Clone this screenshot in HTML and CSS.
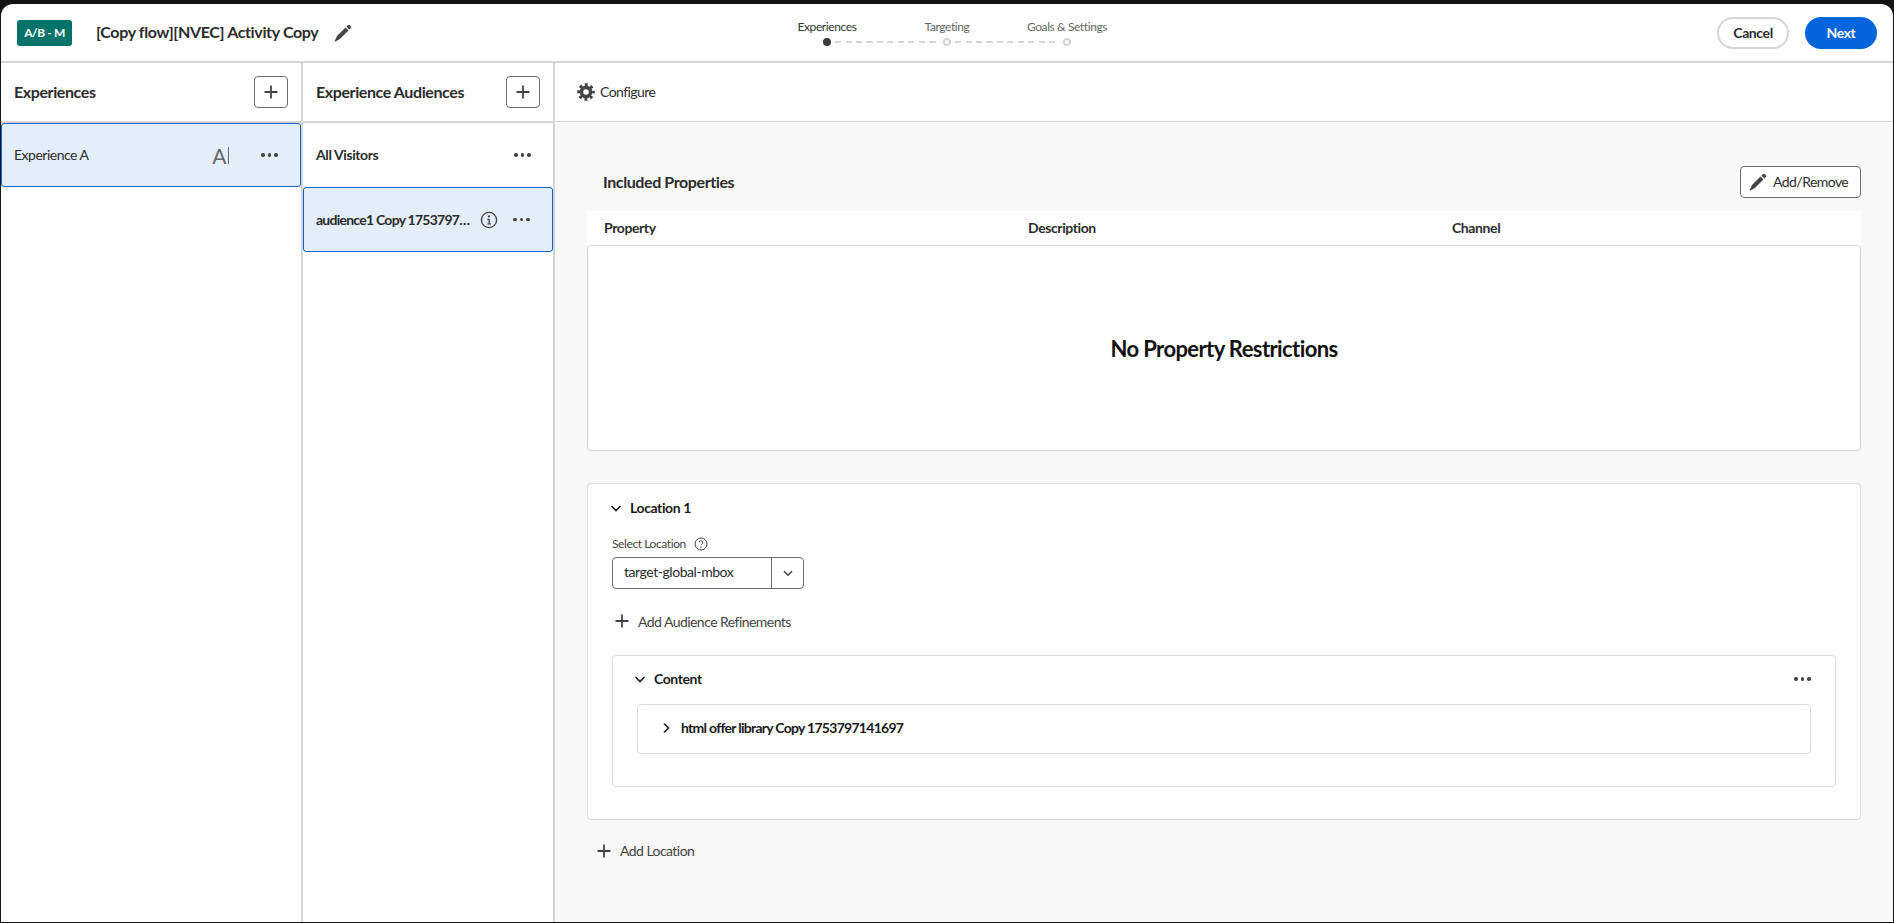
FILE: index.html
```html
<!DOCTYPE html>
<html>
    <head>
        <title>Activity</title>
        <meta charset="utf-8">
        <link rel="stylesheet" href="styles.css">
    </head>
    <body>
        <div class="app">
            <header class="topbar">
                <div class="topbar-left">
                    <span class="badge">A/B - M</span>
                    <span class="activity-name">[Copy flow][NVEC] Activity Copy</span>
                    <svg class="icon pencil" viewBox="0 0 18 18"><path d="M14.1 1a1 1 0 0 1 1.4 0l1.5 1.5a1 1 0 0 1 0 1.4L15.4 5.6 12.4 2.6zM11.5 3.5l3 3-8.6 8.6-4.6 2.4a.4.4 0 0 1-.6-.6l2.3-4.8z"/></svg>
                </div>
                <div class="stepper">
                    <div class="step-labels">
                        <span class="step-label active">Experiences</span>
                        <span class="step-label">Targeting</span>
                        <span class="step-label">Goals &amp; Settings</span>
                    </div>
                    <div class="step-track">
                        <span class="step-dot active"></span>
                        <span class="step-dash"></span>
                        <span class="step-dot"></span>
                        <span class="step-dash"></span>
                        <span class="step-dot"></span>
                    </div>
                </div>
                <div class="topbar-right">
                    <button class="btn-cancel">Cancel</button>
                    <button class="btn-next">Next</button>
                </div>
            </header>
            <div class="main">
                <section class="column">
                    <div class="column-head">
                        <h2>Experiences</h2>
                        <button class="btn-add"><svg class="icon" viewBox="0 0 18 18"><path d="M8.1 2.5h1.8v5.6h5.6v1.8H9.9v5.6H8.1V9.9H2.5V8.1h5.6z"/></svg></button>
                    </div>
                    <div class="row selected">
                        <span class="row-name plain">Experience A</span>
                        <span class="letter">A</span>
                        <span class="dots"><i></i><i></i><i></i></span>
                    </div>
                </section>
                <section class="column narrow">
                    <div class="column-head">
                        <h2>Experience Audiences</h2>
                        <button class="btn-add"><svg class="icon" viewBox="0 0 18 18"><path d="M8.1 2.5h1.8v5.6h5.6v1.8H9.9v5.6H8.1V9.9H2.5V8.1h5.6z"/></svg></button>
                    </div>
                    <div class="row">
                        <span class="row-name">All Visitors</span>
                        <span class="dots"><i></i><i></i><i></i></span>
                    </div>
                    <div class="row selected tall">
                        <span class="row-name clip">audience1 Copy 1753797…</span>
                        <svg class="icon info" viewBox="0 0 18 18"><circle cx="9" cy="9" r="7.6" fill="none" stroke="#444" stroke-width="1.4"/><circle cx="9" cy="5.4" r="1.1"/><path d="M7.3 7.8h2.6v4.6h1.1v1.1H7.2v-1.1h1.3V8.9H7.3z"/></svg>
                        <span class="dots"><i></i><i></i><i></i></span>
                    </div>
                </section>
                <section class="detail">
                    <div class="toolbar">
                        <svg class="icon gear" viewBox="0 0 18 18">
                            <circle cx="9" cy="9" r="7.3" fill="none" stroke="#444" stroke-width="3" stroke-dasharray="2.87 2.87" stroke-dashoffset="1.43"/>
                            <circle cx="9" cy="9" r="4.6" fill="none" stroke="#444" stroke-width="3.6"/>
                        </svg>
                        <span class="text-up tight">Configure</span>
                    </div>
                    <div class="detail-body">
                        <div class="props-head">
                            <h3 class="text-up">Included Properties</h3>
                            <button class="btn-outline">
                                <svg class="icon pencil" viewBox="0 0 18 18"><path d="M14.1 1a1 1 0 0 1 1.4 0l1.5 1.5a1 1 0 0 1 0 1.4L15.4 5.6 12.4 2.6zM11.5 3.5l3 3-8.6 8.6-4.6 2.4a.4.4 0 0 1-.6-.6l2.3-4.8z"/></svg>
                                <span class="text-up tight">Add/Remove</span>
                            </button>
                        </div>
                        <div class="props-columns">
                            <span class="text-up">Property</span>
                            <span class="text-up">Description</span>
                            <span class="text-up">Channel</span>
                        </div>
                        <div class="props-empty">No Property Restrictions</div>

                        <div class="card location">
                            <div class="card-title">
                                <svg class="icon chevron" viewBox="0 0 12 12"><path d="M1.5 4 6 8.5 10.5 4" fill="none" stroke="#222" stroke-width="1.7"/></svg>
                                <span class="text-up">Location 1</span>
                            </div>
                            <div class="field-label">
                                <span class="text-up">Select Location</span>
                                <svg class="icon help" viewBox="0 0 14 14"><circle cx="7" cy="7" r="6" fill="none" stroke="#444" stroke-width="1"/><path d="M5.2 5.6a1.8 1.8 0 1 1 2.7 1.5c-.6.4-.9.7-.9 1.3" fill="none" stroke="#444" stroke-width="1"/><circle cx="7" cy="10.2" r=".7" fill="#444"/></svg>
                            </div>
                            <div class="combo">
                                <span class="combo-value">target-global-mbox</span>
                                <span class="combo-arrow"><svg class="icon chevron-sm" viewBox="0 0 12 12"><path d="M2 4.2 6 8.2 10 4.2" fill="none" stroke="#444" stroke-width="1.5"/></svg></span>
                            </div>
                            <div class="add-link refine">
                                <svg class="icon plus" viewBox="0 0 18 18"><path d="M8.1 2.5h1.8v5.6h5.6v1.8H9.9v5.6H8.1V9.9H2.5V8.1h5.6z"/></svg>
                                <span class="tight">Add Audience Refinements</span>
                            </div>
                            <div class="card content">
                                <div class="card-title content-title">
                                    <svg class="icon chevron" viewBox="0 0 12 12"><path d="M1.5 4 6 8.5 10.5 4" fill="none" stroke="#222" stroke-width="1.7"/></svg>
                                    <span class="text-up">Content</span>
                                    <span class="dots"><i></i><i></i><i></i></span>
                                </div>
                                <div class="card offer">
                                    <svg class="icon chevron-right" viewBox="0 0 12 12"><path d="M4 1.5 8.5 6 4 10.5" fill="none" stroke="#222" stroke-width="1.7"/></svg>
                                    <span class="text-up offer-name">html offer library Copy 1753797141697</span>
                                </div>
                            </div>
                        </div>
                        <div class="add-link add-location">
                            <svg class="icon plus" viewBox="0 0 18 18"><path d="M8.1 2.5h1.8v5.6h5.6v1.8H9.9v5.6H8.1V9.9H2.5V8.1h5.6z"/></svg>
                            <span class="text-up tight">Add Location</span>
                        </div>
                    </div>
                </section>
            </div>
        </div>
    </body>
</html>
```

FILE: styles.css
```css
html, body {
    height: 100%;
}
body {
    margin: 0;
    background-color: #141414;
    font-family: "Lato", "Noto Sans", sans-serif;
    font-size: 14px;
    letter-spacing: -0.4px;
    color: #2c2c2c;
    overflow: hidden;
}
button {
    font-family: inherit;
    letter-spacing: inherit;
    cursor: pointer;
}
h2, h3 {
    margin: 0;
    font-size: 16px;
    font-weight: 700;
}
.icon {
    display: block;
    flex: none;
    width: 18px;
    height: 18px;
    fill: #444;
}
.text-up {
    margin-bottom: 2px;
}
.tight {
    letter-spacing: -0.55px;
}
.app {
    display: flex;
    flex-direction: column;
    height: 918px;
    margin: 4px 1px 0;
    background-color: white;
    border-radius: 12px 12px 0 0;
    overflow: hidden;
}

/* top bar */
.topbar {
    display: grid;
    grid-template-columns: 1fr auto 1fr;
    align-items: center;
    flex: none;
    height: 57px;
    padding: 0 16px;
    border-bottom: 2px solid #d5d5d5;
}
.topbar-left {
    display: flex;
    align-items: center;
}
.badge {
    width: 55px;
    height: 26px;
    line-height: 26px;
    text-align: center;
    background-color: #00736a;
    border-radius: 3px;
    color: white;
    font-size: 12px;
    font-weight: 700;
}
.activity-name {
    margin: 0 0 2px 24px;
    font-size: 16px;
    font-weight: 700;
    letter-spacing: -0.36px;
}
.topbar-left .pencil {
    margin-left: 16px;
}
.stepper {
    width: 360px;
}
.step-labels {
    display: flex;
}
.step-label {
    flex: 1;
    text-align: center;
    font-size: 12px;
    color: #666;
}
.step-label.active {
    color: #333;
}
.step-track {
    display: flex;
    align-items: center;
    gap: 4px;
    margin: 4px 56px 0;
}
.step-dot {
    flex: none;
    width: 8px;
    height: 8px;
    box-sizing: border-box;
    border: 2px solid #d5d5d5;
    border-radius: 50%;
}
.step-dot.active {
    background-color: #3c3c3c;
    border-color: #3c3c3c;
}
.step-dash {
    flex: 1;
    height: 2px;
    background: repeating-linear-gradient(90deg, #d5d5d5 0 6px, transparent 6px 10.5px);
}
.topbar-right {
    display: flex;
    justify-content: flex-end;
    gap: 16px;
}
.btn-cancel,
.btn-next {
    width: 72px;
    height: 32px;
    padding-bottom: 2px;
    border-radius: 16px;
    font-size: 14px;
    font-weight: 700;
}
.btn-cancel {
    background-color: white;
    border: 2px solid #d5d5d5;
    color: #2c2c2c;
}
.btn-next {
    background-color: #0265dc;
    border: 0;
    color: white;
}

/* columns */
.main {
    display: flex;
    flex: 1;
    min-height: 0;
}
.column {
    flex: none;
    width: 300px;
    border-right: 2px solid #d5d5d5;
}
.column.narrow {
    width: 250px;
}
.column-head {
    display: flex;
    align-items: center;
    justify-content: space-between;
    height: 58px;
    padding: 0 13px;
    border-bottom: 2px solid #d5d5d5;
}
.column-head h2 {
    margin-bottom: 2px;
}
.btn-add {
    display: flex;
    align-items: center;
    justify-content: center;
    width: 34px;
    height: 32px;
    padding: 0;
    background-color: white;
    border: 1px solid #6e6e6e;
    border-radius: 4px;
}
.row {
    display: flex;
    align-items: center;
    box-sizing: border-box;
    height: 64px;
    padding: 0 22px 0 13px;
    font-weight: 700;
}
.row.selected {
    background-color: #e4eefa;
    border: 1px solid #0d66d0;
    border-radius: 3px;
    padding-left: 12px;
    padding-right: 22px;
}
.row.tall {
    height: 65px;
}
.row-name {
    flex: 1;
    min-width: 0;
    margin-bottom: 2px;
}
.row-name.plain {
    font-weight: 400;
    letter-spacing: -0.5px;
}
.row-name.clip {
    flex: none;
    width: 155px;
    margin-bottom: 1px;
    white-space: nowrap;
    letter-spacing: -0.75px;
}
.letter {
    width: 16px;
    margin-right: 32px;
    border-right: 1px solid #666;
    font-size: 21px;
    font-weight: 400;
    line-height: 17px;
    color: #666;
}
.info {
    margin-left: 9px;
    margin-right: auto;
}
.dots {
    display: flex;
    gap: 3px;
    margin-left: auto;
}
.dots i {
    width: 3.6px;
    height: 3.6px;
    background-color: #444;
    border-radius: 50%;
}

/* right side */
.detail {
    display: flex;
    flex-direction: column;
    flex: 1;
    min-width: 0;
}
.toolbar {
    display: flex;
    align-items: center;
    gap: 5px;
    flex: none;
    height: 58px;
    padding-left: 22px;
    border-bottom: 1px solid #d5d5d5;
}
.detail-body {
    flex: 1;
    padding: 44px 32px 0;
    background-color: #f8f8f8;
}
.props-head {
    display: flex;
    align-items: center;
    justify-content: space-between;
    height: 32px;
    padding-left: 16px;
}
.btn-outline {
    display: flex;
    align-items: center;
    gap: 6px;
    box-sizing: border-box;
    width: 121px;
    height: 32px;
    padding: 0 8px;
    background-color: white;
    border: 1px solid #6e6e6e;
    border-radius: 4px;
    font-size: 14px;
    color: #2c2c2c;
}
.props-columns {
    display: grid;
    grid-template-columns: repeat(3, 424px);
    align-items: center;
    height: 34px;
    margin-top: 13px;
    padding-left: 17px;
    background-color: white;
    font-weight: 700;
}
.props-empty {
    display: flex;
    align-items: center;
    justify-content: center;
    height: 204px;
    background-color: white;
    border: 1px solid #d5d5d5;
    border-radius: 4px;
    font-size: 22px;
    font-weight: 700;
    letter-spacing: -0.6px;
    color: #111;
}
.card {
    background-color: white;
    border: 1px solid #dcdcdc;
    border-radius: 4px;
}
.location {
    height: 337px;
    margin-top: 32px;
    padding: 0 24px;
    box-sizing: border-box;
}
.card-title {
    display: flex;
    align-items: center;
    gap: 8px;
    height: 48px;
    font-weight: 700;
    color: #1a1a1a;
}
.chevron {
    width: 12px;
    height: 12px;
    margin-left: -2px;
}
.field-label {
    display: flex;
    align-items: center;
    gap: 8px;
    height: 24px;
    font-size: 12px;
    color: #444;
}
.help {
    width: 14px;
    height: 14px;
}
.combo {
    display: flex;
    box-sizing: border-box;
    width: 192px;
    height: 32px;
    margin-top: 1px;
    border: 1px solid #6e6e6e;
    border-radius: 4px;
}
.combo-value {
    flex: 1;
    padding-left: 11px;
    line-height: 28px;
    letter-spacing: -0.45px;
}
.combo-arrow {
    display: flex;
    align-items: center;
    justify-content: center;
    width: 31px;
    border-left: 1px solid #6e6e6e;
}
.chevron-sm {
    width: 12px;
    height: 12px;
}
.add-link {
    display: flex;
    align-items: center;
    gap: 7px;
    color: #444;
}
.refine {
    height: 32px;
    margin-top: 16px;
    padding-left: 1px;
}
.plus {
    width: 18px;
    height: 18px;
}
.content {
    height: 132px;
    box-sizing: border-box;
    margin-top: 18px;
    padding: 0 24px;
}
.content-title {
    height: 46px;
}
.content-title .chevron {
    margin-left: -3px;
}
.offer {
    display: flex;
    align-items: center;
    gap: 9px;
    box-sizing: border-box;
    height: 50px;
    margin-top: 2px;
    padding-left: 22px;
    font-weight: 700;
    color: #1a1a1a;
}
.offer-name {
    margin-bottom: 4px;
    letter-spacing: -0.72px;
}
.chevron-right {
    width: 12px;
    height: 12px;
    margin-bottom: 2px;
}
.add-location {
    height: 32px;
    margin-top: 15px;
    padding-left: 8px;
}
```
